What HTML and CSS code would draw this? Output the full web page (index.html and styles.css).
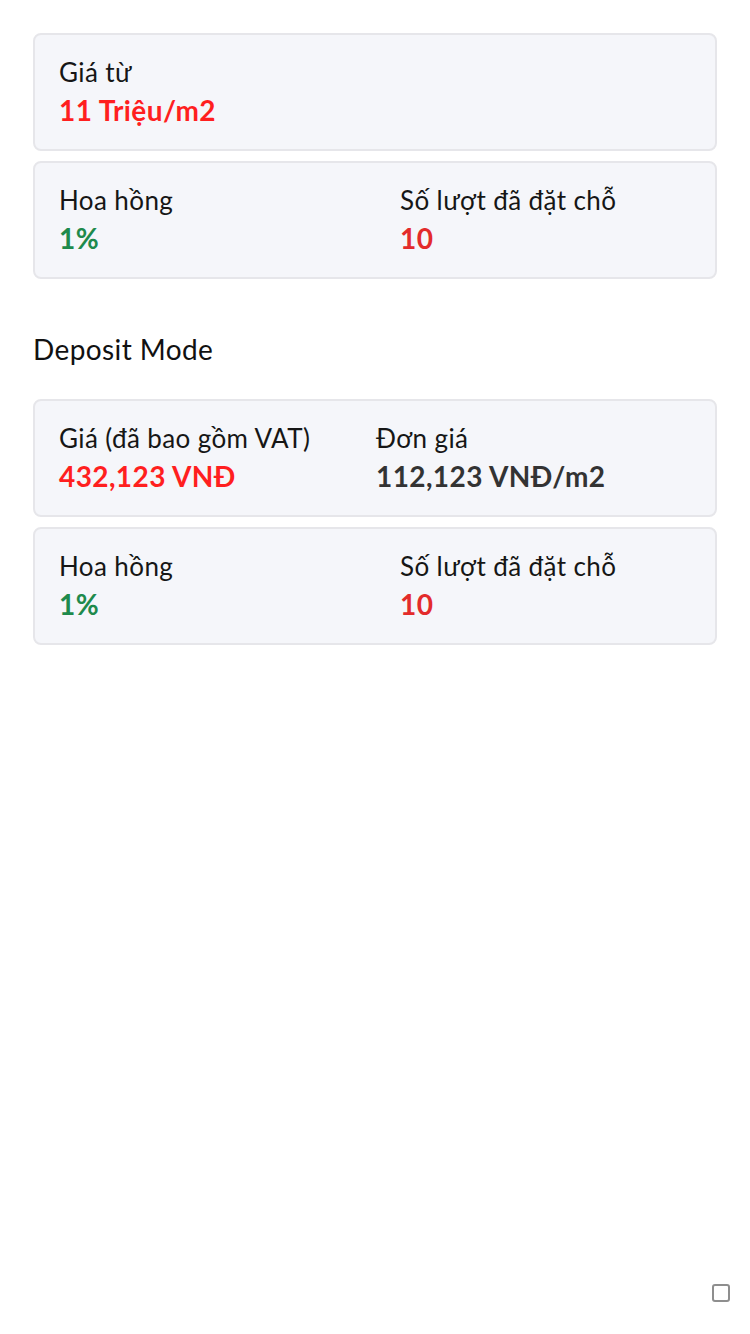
FILE: index.html
```html
<!DOCTYPE html>
<html lang="vi">
<head>
<meta charset="utf-8">
<link rel="stylesheet" href="styles.css">
</head>
<body>
<main class="page">
  <section class="card">
    <div class="item">
      <div class="label">Giá từ</div>
      <div class="value red">11 Triệu/m2</div>
    </div>
  </section>
  <section class="card cols wide">
    <div class="item">
      <div class="label">Hoa hồng</div>
      <div class="value green">1%</div>
    </div>
    <div class="item">
      <div class="label">Số lượt đã đặt chỗ</div>
      <div class="value red2">10</div>
    </div>
  </section>

  <h2 class="heading">Deposit Mode</h2>

  <section class="card cols">
    <div class="item">
      <div class="label">Giá (đã bao gồm VAT)</div>
      <div class="value red">432,123 VNĐ</div>
    </div>
    <div class="item">
      <div class="label">Đơn giá</div>
      <div class="value dark">112,123 VNĐ/m2</div>
    </div>
  </section>
  <section class="card cols wide">
    <div class="item">
      <div class="label">Hoa hồng</div>
      <div class="value green">1%</div>
    </div>
    <div class="item">
      <div class="label">Số lượt đã đặt chỗ</div>
      <div class="value red2">10</div>
    </div>
  </section>
</main>
<div class="checkbox"></div>
</body>
</html>
```
FILE: styles.css
```css
html, body {
  margin: 0;
  padding: 0;
  background: #ffffff;
}
body {
  font-family: Lato, "Noto Sans", sans-serif;
  color: #1a1a1a;
  width: 750px;
  height: 1334px;
  position: relative;
}
.page {
  padding: 33px 33px 0 33px;
  display: flex;
  flex-direction: column;
  gap: 10px;
}
.card {
  box-sizing: border-box;
  width: 684px;
  height: 118px;
  background: #f5f6fa;
  border: 2px solid #e6e6ea;
  border-radius: 8px;
  padding: 20px 24px 18px 24px;
  display: grid;
  grid-template-columns: 1fr;
}
.card.cols {
  grid-template-columns: 317px 1fr;
}
.card.cols.wide {
  grid-template-columns: 341px 1fr;
}
.item {
  display: flex;
  flex-direction: column;
}
.label {
  font-size: 26px;
  line-height: 34px;
  letter-spacing: 0.4px;
  color: #161616;
}
.value {
  font-size: 28px;
  line-height: 42px;
  letter-spacing: 0.4px;
  font-weight: 700;
}
.red { color: #ff1f1f; }
.red2 { color: #e32b2b; }
.green { color: #1e8a4c; }
.dark { color: #333333; }
.heading {
  margin: 40px 0 20px 0;
  font-size: 28px;
  line-height: 40px;
  letter-spacing: 0.4px;
  font-weight: 400;
  color: #111111;
}
.checkbox {
  position: absolute;
  right: 20px;
  bottom: 32px;
  width: 14px;
  height: 14px;
  border: 2px solid #8e8e8e;
  border-radius: 3px;
  background: #fff;
}
```
